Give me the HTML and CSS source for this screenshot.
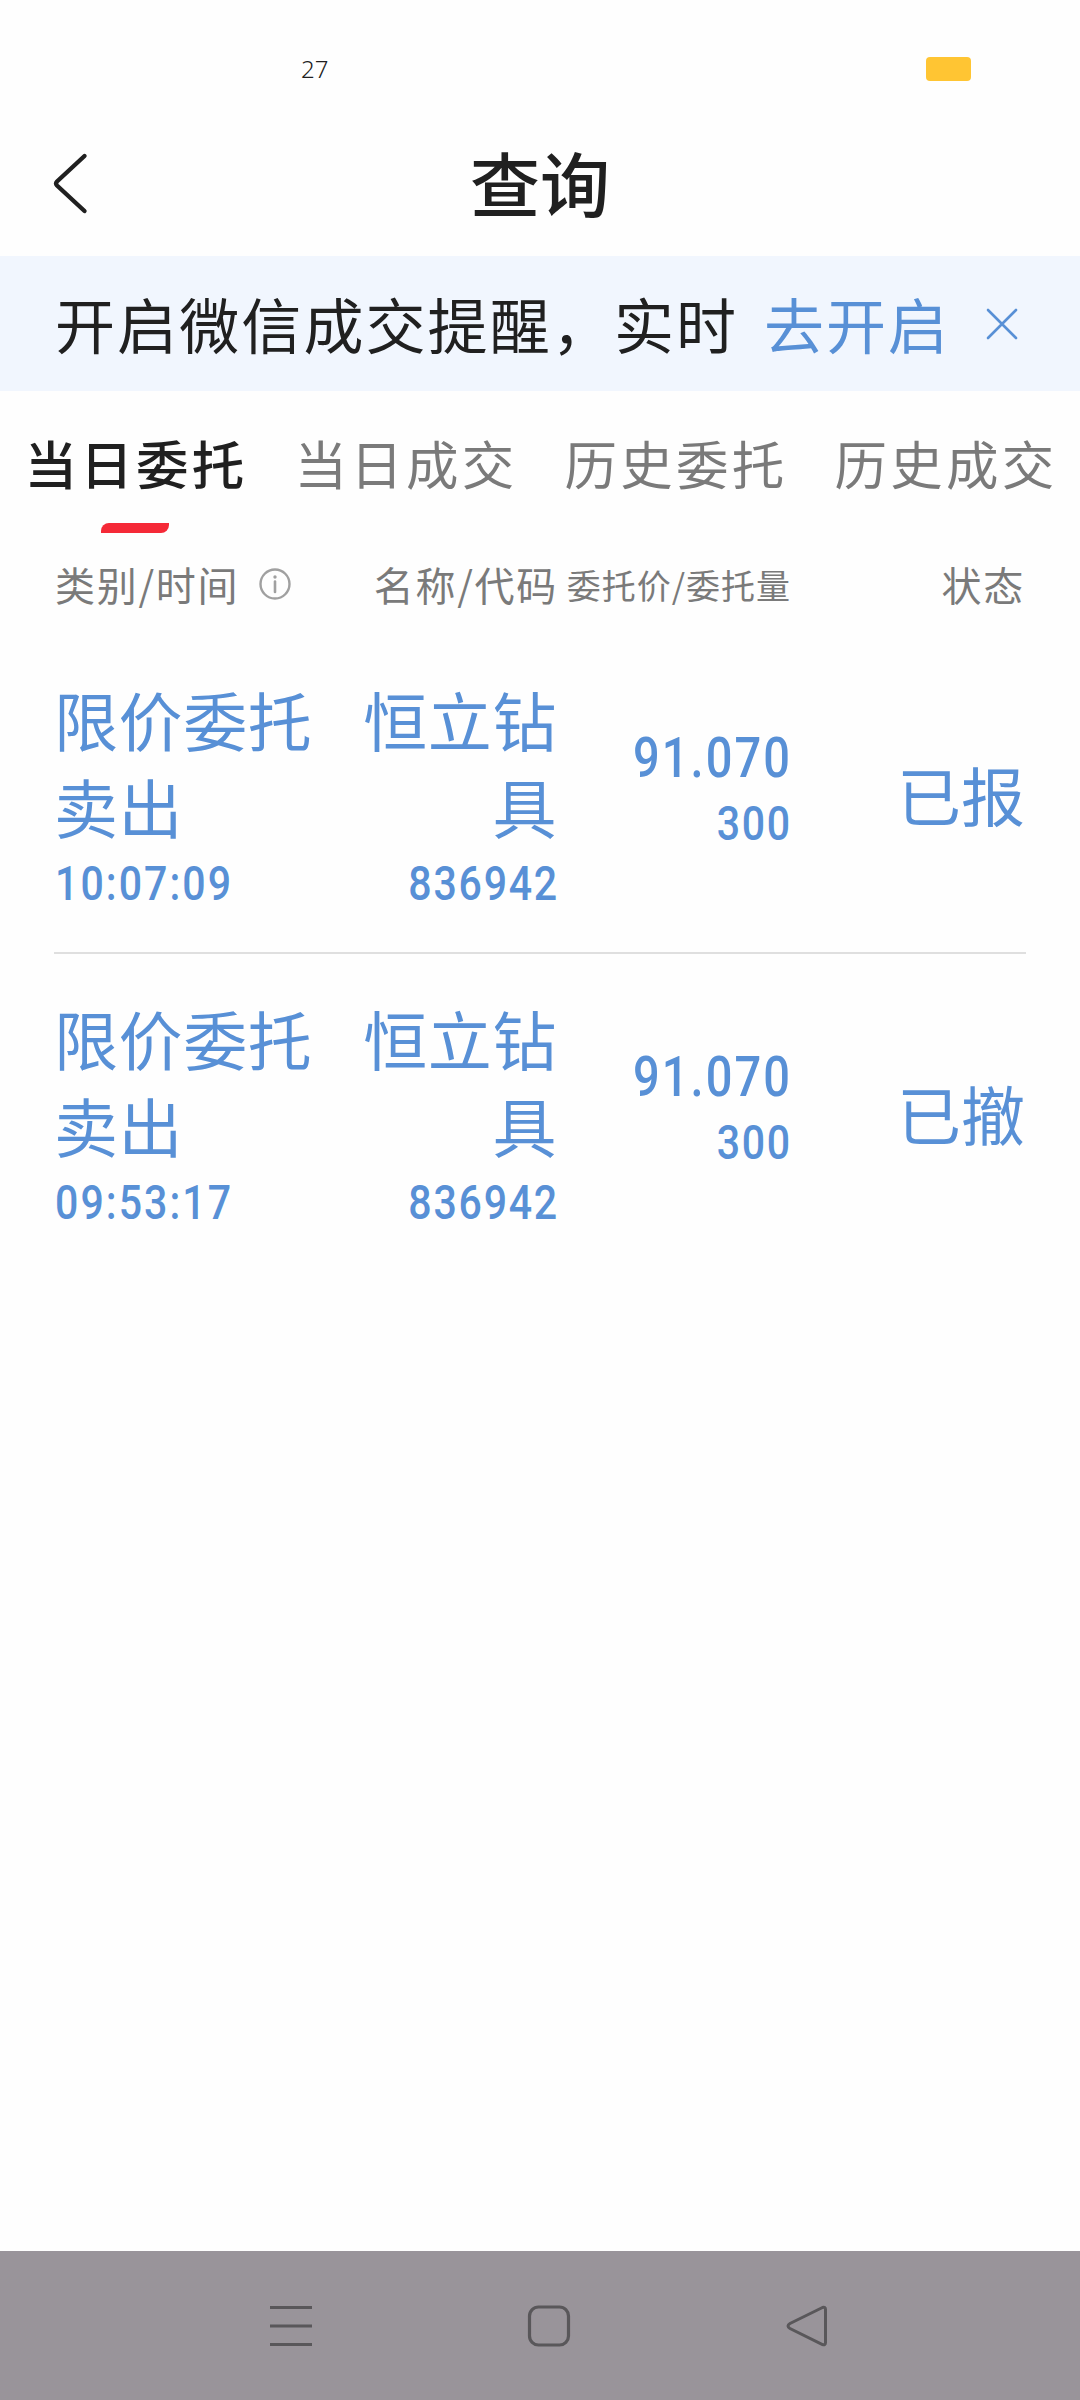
FILE: index.html
```html
<!DOCTYPE html>
<html lang="zh-CN">
<head>
<meta charset="utf-8">
<title>查询</title>
<link rel="stylesheet" href="styles.css">
</head>
<body>
<div class="screen">
  <div class="status-bar"><span class="status-num">27</span><span class="battery"></span></div>
  <header class="title-bar">
    <svg class="back" width="36" height="64" viewBox="0 0 36 64"><path d="M32.500 4 5 29.500Q3 31.500 5 33.500L32.500 59" fill="none" stroke="#202020" stroke-width="4.400" stroke-linecap="round"/></svg>
    <h1 class="title">查询</h1>
  </header>
  <div class="banner">
    <span class="banner-text">开启微信成交提醒，实时</span>
    <a class="banner-link">去开启</a>
    <svg class="close" width="32" height="32" viewBox="0 0 32 32"><path d="M2 2 30 30M30 2 2 30" fill="none" stroke="#5890d6" stroke-width="2.600" stroke-linecap="round"/></svg>
  </div>
  <nav class="tabs">
    <div class="tab active">当日委托</div>
    <div class="tab">当日成交</div>
    <div class="tab">历史委托</div>
    <div class="tab">历史成交</div>
  </nav>
  <div class="grid head">
    <div class="c1">类别/时间<svg class="info" width="32" height="32" viewBox="0 0 32 32"><circle cx="16" cy="16" r="14.500" fill="none" stroke="#a0a0a0" stroke-width="2.400"/><path d="M16 13.500V24" stroke="#a0a0a0" stroke-width="2.600" stroke-linecap="round"/><circle cx="16" cy="9" r="1.700" fill="#a0a0a0"/></svg></div>
    <div class="c2">名称/代码</div>
    <div class="c3 small">委托价/委托量</div>
    <div class="c4">状态</div>
  </div>
  <main class="list">
    <div class="grid row">
      <div class="c1">限价委托卖出<div class="num left">10:07:09</div></div>
      <div class="c2">恒立钻具<div class="num">836942</div></div>
      <div class="c3"><div class="num price">91.070</div><div class="num">300</div></div>
      <div class="c4">已报</div>
    </div>
    <div class="grid row">
      <div class="c1">限价委托卖出<div class="num left">09:53:17</div></div>
      <div class="c2">恒立钻具<div class="num">836942</div></div>
      <div class="c3"><div class="num price">91.070</div><div class="num">300</div></div>
      <div class="c4">已撤</div>
    </div>
  </main>
  <footer class="nav">
    <svg width="44" height="44" viewBox="0 0 44 44"><path d="M1 3.500H43M1 22H43M1 40.500H43" stroke="#59575a" stroke-width="3.200"/></svg>
    <svg width="44" height="44" viewBox="0 0 44 44"><rect x="2.500" y="3" width="39" height="38" rx="9" fill="none" stroke="#59575a" stroke-width="3.200"/></svg>
    <svg width="44" height="44" viewBox="0 0 44 44"><path d="M37.500 3.500 5 19.500Q1 22 5 24.500L37.500 40.500Q40.500 41.500 40.500 38.500V5.500Q40.500 2.500 37.500 3.500Z" fill="none" stroke="#59575a" stroke-width="3"/></svg>
  </footer>
</div>
</body>
</html>
```
FILE: styles.css
```css
* { box-sizing: border-box; }
body { margin: 0; background: #fefefe; }
.screen {
  width: 1080px;
  height: 2400px;
  display: flex;
  flex-direction: column;
  font-family: "Noto Sans CJK SC", sans-serif;
  color: #202020;
  white-space: nowrap;
}
.status-bar {
  height: 138px;
  padding: 0 109px 0 301px;
  display: flex;
  align-items: center;
  justify-content: space-between;
  font: 350 24px "Noto Sans", sans-serif;
}
.status-num { padding-bottom: 2px; }
.battery { width: 45px; height: 24px; border-radius: 4px; background: #ffc533; }
.title-bar {
  height: 118px;
  padding: 0 52px 27px;
  display: grid;
  grid-template-columns: 36px 1fr 36px;
  align-items: center;
}
.title { margin: 0; text-align: center; font-size: 70px; line-height: 84px; font-weight: 500; padding-bottom: 4px; }
.banner {
  height: 135px;
  padding: 0 62px 0 55px;
  display: flex;
  align-items: center;
  background: #f1f6fe;
  font-size: 60px;
  line-height: 90px;
  letter-spacing: 1.9px;
}
.banner-text { width: 709px; letter-spacing: 2.100px; padding-bottom: 2px; }
.banner-link { color: #5890d6; width: 222px; padding-bottom: 2px; }
.close { flex: none; }
.tabs {
  height: 142px;
  display: grid;
  grid-template-columns: repeat(4, 270px);
  font-size: 52.500px;
  letter-spacing: 3.200px;
  line-height: 143px;
  color: #7a7a7a;
}
.tab { text-align: center; padding-left: 2px; }
.active { color: #202020; font-weight: 500; }
.active::after {
  content: "";
  display: block;
  width: 68px;
  height: 10px;
  margin: -11px 0 0 99px;
  background: #f52937;
  border-radius: 8px 0;
}
.grid {
  display: grid;
  grid-template-columns: 260px 242px 234px 234px;
  padding-left: 55px;
}
.c2, .c3, .c4 { text-align: right; }
.head {
  height: 100px;
  padding-top: 2px;
  align-items: center;
  font-size: 40px;
  letter-spacing: 1.700px;
  color: #7a7a7a;
}
.head .c1 { display: flex; align-items: center; }
.info { margin-left: 20px; }
.head .c2 { margin-right: -1px; }
.head .small { font-size: 34px; letter-spacing: 1px; }
.list { flex: 1; color: #5890d6; }
.row {
  height: 319px;
  padding-top: 42px;
  font-size: 64px;
  line-height: 87px;
}
.row + .row { background: linear-gradient(#dfdfdf, #dfdfdf) 54px 0 / 972px 2px no-repeat; }
.row .c1, .row .c2 { white-space: normal; }
.row .c1, .row .c2 { letter-spacing: .6px; }
.row .c1 { margin-left: -1px; }
.row .c2 { padding-left: 42px; }
.row .c3 { padding-top: 51px; }
.row .c4 { padding-top: 75px; }
.num {
  padding-top: 3px;
  margin-right: -2px;
  font: 500 48px/64px Roboto, sans-serif;
  letter-spacing: 2.100px;
  transform: scaleX(.855);
  transform-origin: right;
}
.num.left { transform-origin: left; letter-spacing: 2.400px; margin-left: 1px; }
.row .c3 .num { margin-right: -1px; padding-top: 2px; }
.row .c3 .price { font-size: 55px; letter-spacing: 2.400px; padding-top: 0; }
.nav {
  height: 149px;
  background: #99949a;
  display: flex;
  align-items: center;
  gap: 214px;
  padding: 0 0 0 269px;
}
```
